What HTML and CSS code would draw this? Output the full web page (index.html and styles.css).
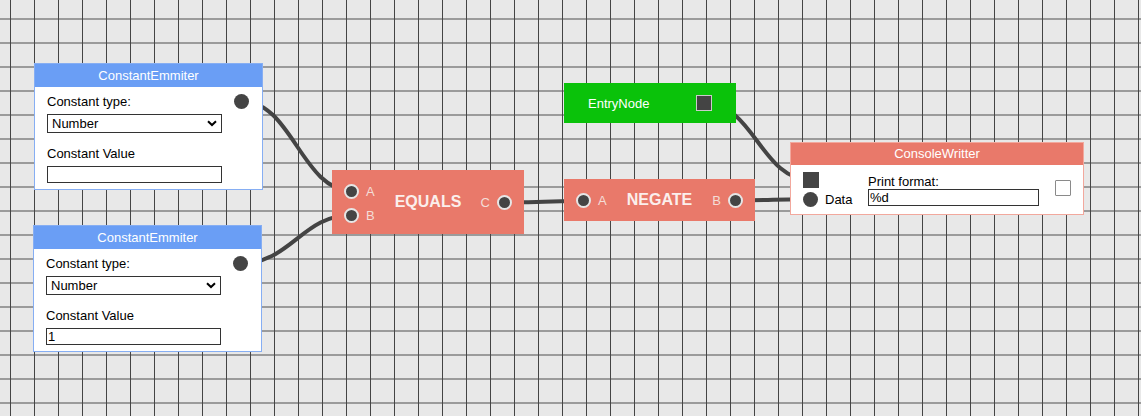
FILE: index.html
```html
<!DOCTYPE html>
<html>
<head>
<meta charset="utf-8">
<link rel="stylesheet" href="styles.css">
</head>
<body>
<div class="canvas">
  <svg class="wires" width="1141" height="416" viewBox="0 0 1141 416">
    <path d="M241.7 101 C291.7 101 302 191 352 191"/>
    <path d="M241 263.3 C291 263.3 302 215 352 215"/>
    <path d="M504 202.3 C554 202.3 534 201 584 201"/>
    <path d="M704 103 C754 103 761 180 811 180"/>
    <path d="M735 200.3 C785 200.3 761 199.3 811 199.3"/>
  </svg>

  <div class="node card card-blue n-const1">
    <div class="card-head">ConstantEmmiter</div>
    <div class="card-body">
      <div class="fields">
        <label class="lbl">Constant type:</label>
        <div class="select-wrap">
          <select class="sel"><option>Number</option></select>
          <svg class="chev" width="10" height="7" viewBox="0 0 10 7"><path d="M1 1.2 L5 5 L9 1.2"/></svg>
        </div>
        <label class="lbl lbl-gap">Constant Value</label>
        <input class="txt" type="text" value="">
      </div>
      <span class="port"></span>
    </div>
  </div>

  <div class="node card card-blue n-const2">
    <div class="card-head">ConstantEmmiter</div>
    <div class="card-body">
      <div class="fields">
        <label class="lbl">Constant type:</label>
        <div class="select-wrap">
          <select class="sel"><option>Number</option></select>
          <svg class="chev" width="10" height="7" viewBox="0 0 10 7"><path d="M1 1.2 L5 5 L9 1.2"/></svg>
        </div>
        <label class="lbl lbl-gap">Constant Value</label>
        <input class="txt" type="text" value="1">
      </div>
      <span class="port"></span>
    </div>
  </div>

  <div class="node op n-equals">
    <div class="ports ports-in">
      <div class="prow"><span class="port ring"></span><span class="plbl">A</span></div>
      <div class="prow"><span class="port ring"></span><span class="plbl">B</span></div>
    </div>
    <div class="op-title">EQUALS</div>
    <div class="ports ports-out">
      <div class="prow"><span class="plbl">C</span><span class="port ring"></span></div>
    </div>
  </div>

  <div class="node op n-negate">
    <div class="ports ports-in">
      <div class="prow"><span class="port ring"></span><span class="plbl">A</span></div>
    </div>
    <div class="op-title">NEGATE</div>
    <div class="ports ports-out">
      <div class="prow"><span class="plbl">B</span><span class="port ring"></span></div>
    </div>
  </div>

  <div class="node entry n-entry">
    <span class="entry-title">EntryNode</span>
    <span class="sq-port sq-border"></span>
  </div>

  <div class="node card card-red n-console">
    <div class="card-head">ConsoleWritter</div>
    <div class="console-body">
      <div class="exec-col">
        <span class="sq-port"></span>
        <div class="data-row"><span class="port"></span><span class="data-lbl">Data</span></div>
      </div>
      <div class="fmt-col">
        <label class="lbl">Print format:</label>
        <input class="txt fmt" type="text" value="%d">
      </div>
      <input class="chk" type="checkbox">
    </div>
  </div>
</div>
</body>
</html>
```

FILE: styles.css
```css
html, body {
  margin: 0;
  padding: 0;
}

body {
  font-family: "Liberation Sans", Arial, sans-serif;
  font-size: 13px;
  color: #000;
}

.canvas {
  position: relative;
  width: 1141px;
  height: 416px;
  overflow: hidden;
  background-color: #e8e8e8;
  background-image:
    linear-gradient(to right, transparent 10px, #454545 10px, #454545 11px, transparent 11px),
    linear-gradient(to bottom, transparent 18px, #9b9b9b 18px, #9b9b9b 20px, transparent 20px);
  background-size: 24px 24px;
}

.wires {
  position: absolute;
  left: 0;
  top: 0;
}

.wires path {
  fill: none;
  stroke: #444;
  stroke-width: 4;
}

.node {
  position: absolute;
  box-sizing: border-box;
}

/* node positions on the canvas */
.n-const1 { left: 34px; top: 63px; }
.n-const2 { left: 33px; top: 225px; }
.n-equals { left: 332px; top: 170px; width: 192px; height: 64px; }
.n-negate { left: 564px; top: 179px; width: 191px; height: 42px; }
.n-entry { left: 564px; top: 83px; width: 172px; height: 40px; }
.n-console { left: 790px; top: 142px; width: 294px; }

/* card nodes */
.card {
  background: #fff;
  border: 1px solid #86aef3;
}

.card-blue { width: 229px; }

.card-blue .card-head {
  background: #6a9ef5;
}

.card-red {
  border-color: #f2a89d;
}

.card-red .card-head {
  background: #e9796a;
  height: 22px;
  line-height: 22px;
}

.card-head {
  height: 23px;
  line-height: 23px;
  color: #fff;
  text-align: center;
  font-size: 13px;
}

.card-body {
  display: flex;
  justify-content: space-between;
  align-items: flex-start;
  padding: 7px 13px 6px 12px;
}

.fields {
  display: flex;
  flex-direction: column;
  width: 175px;
}

.lbl {
  display: block;
  line-height: 15px;
  height: 15px;
  margin-bottom: 5px;
  font-size: 13px;
}

.fmt-col .lbl {
  margin-bottom: 0;
}

.lbl-gap {
  margin-top: 13px;
}

.select-wrap {
  position: relative;
  height: 19px;
}

.sel {
  -webkit-appearance: none;
  appearance: none;
  box-sizing: border-box;
  width: 175px;
  height: 19px;
  margin: 0;
  padding: 0 0 0 4px;
  border: 1px solid #333;
  border-radius: 0;
  background: #fff;
  font-family: inherit;
  font-size: 13px;
  line-height: 17px;
  color: #000;
}

.chev {
  position: absolute;
  right: 5px;
  top: 6px;
  pointer-events: none;
}

.chev path {
  fill: none;
  stroke: #000;
  stroke-width: 2;
}

.txt {
  box-sizing: border-box;
  width: 175px;
  height: 17px;
  margin: 0;
  padding: 0 1px;
  border: 1px solid #333;
  border-radius: 0;
  background: #fff;
  font-family: inherit;
  font-size: 13px;
  color: #000;
  outline: none;
}

/* ports */
.port {
  display: block;
  flex: none;
  box-sizing: border-box;
  width: 15px;
  height: 15px;
  border-radius: 50%;
  background: #444;
}

.port.ring {
  border: 2px solid #e6e6e6;
}

.sq-port {
  display: block;
  flex: none;
  box-sizing: border-box;
  width: 16px;
  height: 16px;
  background: #444;
}

.sq-border {
  border: 1px solid #cbcbcb;
}

/* operator nodes */
.op {
  background: #e9796a;
  display: grid;
  grid-template-columns: 1fr auto 1fr;
  align-items: center;
  padding: 0 12px;
}

.ports {
  display: flex;
  flex-direction: column;
}

.ports-in {
  justify-self: start;
}

.n-equals .ports-in {
  margin-top: 2px;
}

.ports-out {
  justify-self: end;
}

.prow {
  display: flex;
  align-items: center;
  gap: 7px;
  height: 24px;
}

.plbl {
  color: #f4ddd7;
  font-size: 13px;
  line-height: 15px;
}

.op-title {
  color: #fbefec;
  font-weight: bold;
  font-size: 16px;
  text-align: center;
}

/* entry node */
.entry {
  background: #0ac20a;
  display: flex;
  align-items: center;
  justify-content: space-between;
  padding: 0 24px;
}

.entry-title {
  color: #fff;
  font-size: 13px;
}

/* console writer */
.console-body {
  display: flex;
  align-items: flex-start;
  padding: 7px 12px 7px 12px;
}

.exec-col {
  display: flex;
  flex-direction: column;
  gap: 4px;
  width: 49px;
  padding-left: 0;
}

.data-row {
  display: flex;
  align-items: center;
  gap: 7px;
  height: 15px;
}

.data-lbl {
  font-size: 13px;
  line-height: 15px;
}

.fmt-col {
  display: flex;
  flex-direction: column;
  margin-left: 16px;
  margin-top: 2px;
}

.fmt {
  width: 171px;
}

.chk {
  -webkit-appearance: none;
  appearance: none;
  box-sizing: border-box;
  width: 16px;
  height: 16px;
  margin: 8px 0 0 16px;
  border: 1px solid #8a8a8a;
  border-radius: 1px;
  background: #fff;
}
```
